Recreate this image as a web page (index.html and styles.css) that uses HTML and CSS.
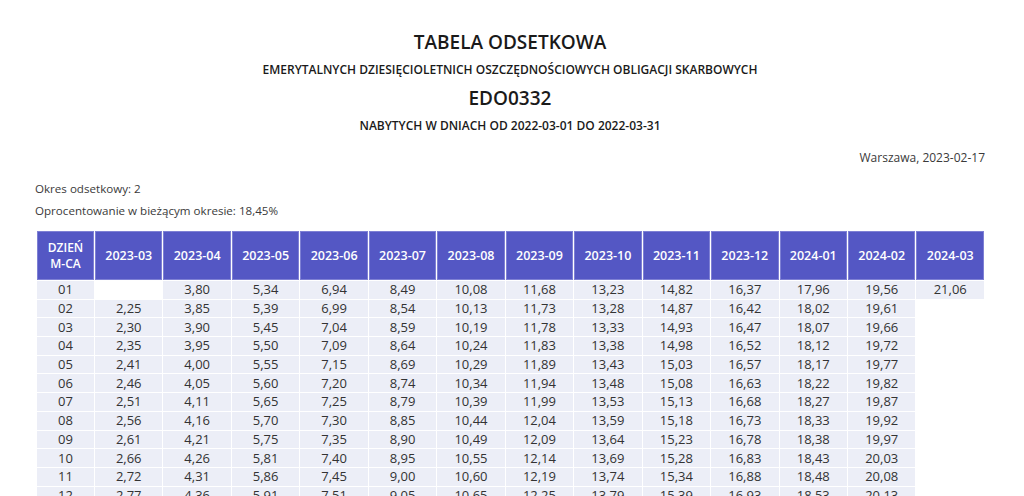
FILE: index.html
```html
<!DOCTYPE html>
<html lang="pl">
<head>
<meta charset="utf-8">
<title>Tabela odsetkowa EDO0332</title>
<link rel="stylesheet" href="styles.css">
</head>
<body>
<div class="page">
  <header class="doc-head">
    <h1 class="title">TABELA ODSETKOWA</h1>
    <p class="subtitle">EMERYTALNYCH DZIESIĘCIOLETNICH OSZCZĘDNOŚCIOWYCH OBLIGACJI SKARBOWYCH</p>
    <h2 class="code">EDO0332</h2>
    <p class="subtitle range">NABYTYCH W DNIACH OD 2022-03-01 DO 2022-03-31</p>
  </header>
  <p class="date">Warszawa, 2023-02-17</p>
  <div class="info">
    <p>Okres odsetkowy: 2</p>
    <p>Oprocentowanie w bieżącym okresie: 18,45%</p>
  </div>
  <table class="rates">
    <thead>
      <tr>
        <th class="day">DZIEŃ<br>M-CA</th>
        <th>2023-03</th><th>2023-04</th><th>2023-05</th><th>2023-06</th><th>2023-07</th><th>2023-08</th><th>2023-09</th><th>2023-10</th><th>2023-11</th><th>2023-12</th><th>2024-01</th><th>2024-02</th><th>2024-03</th>
      </tr>
    </thead>
    <tbody>
      <tr><td>01</td><td class="empty"></td><td>3,80</td><td>5,34</td><td>6,94</td><td>8,49</td><td>10,08</td><td>11,68</td><td>13,23</td><td>14,82</td><td>16,37</td><td>17,96</td><td>19,56</td><td>21,06</td></tr>
      <tr><td>02</td><td>2,25</td><td>3,85</td><td>5,39</td><td>6,99</td><td>8,54</td><td>10,13</td><td>11,73</td><td>13,28</td><td>14,87</td><td>16,42</td><td>18,02</td><td>19,61</td><td class="empty"></td></tr>
      <tr><td>03</td><td>2,30</td><td>3,90</td><td>5,45</td><td>7,04</td><td>8,59</td><td>10,19</td><td>11,78</td><td>13,33</td><td>14,93</td><td>16,47</td><td>18,07</td><td>19,66</td><td class="empty"></td></tr>
      <tr><td>04</td><td>2,35</td><td>3,95</td><td>5,50</td><td>7,09</td><td>8,64</td><td>10,24</td><td>11,83</td><td>13,38</td><td>14,98</td><td>16,52</td><td>18,12</td><td>19,72</td><td class="empty"></td></tr>
      <tr><td>05</td><td>2,41</td><td>4,00</td><td>5,55</td><td>7,15</td><td>8,69</td><td>10,29</td><td>11,89</td><td>13,43</td><td>15,03</td><td>16,57</td><td>18,17</td><td>19,77</td><td class="empty"></td></tr>
      <tr><td>06</td><td>2,46</td><td>4,05</td><td>5,60</td><td>7,20</td><td>8,74</td><td>10,34</td><td>11,94</td><td>13,48</td><td>15,08</td><td>16,63</td><td>18,22</td><td>19,82</td><td class="empty"></td></tr>
      <tr><td>07</td><td>2,51</td><td>4,11</td><td>5,65</td><td>7,25</td><td>8,79</td><td>10,39</td><td>11,99</td><td>13,53</td><td>15,13</td><td>16,68</td><td>18,27</td><td>19,87</td><td class="empty"></td></tr>
      <tr><td>08</td><td>2,56</td><td>4,16</td><td>5,70</td><td>7,30</td><td>8,85</td><td>10,44</td><td>12,04</td><td>13,59</td><td>15,18</td><td>16,73</td><td>18,33</td><td>19,92</td><td class="empty"></td></tr>
      <tr><td>09</td><td>2,61</td><td>4,21</td><td>5,75</td><td>7,35</td><td>8,90</td><td>10,49</td><td>12,09</td><td>13,64</td><td>15,23</td><td>16,78</td><td>18,38</td><td>19,97</td><td class="empty"></td></tr>
      <tr><td>10</td><td>2,66</td><td>4,26</td><td>5,81</td><td>7,40</td><td>8,95</td><td>10,55</td><td>12,14</td><td>13,69</td><td>15,28</td><td>16,83</td><td>18,43</td><td>20,03</td><td class="empty"></td></tr>
      <tr><td>11</td><td>2,72</td><td>4,31</td><td>5,86</td><td>7,45</td><td>9,00</td><td>10,60</td><td>12,19</td><td>13,74</td><td>15,34</td><td>16,88</td><td>18,48</td><td>20,08</td><td class="empty"></td></tr>
      <tr><td>12</td><td>2,77</td><td>4,36</td><td>5,91</td><td>7,51</td><td>9,05</td><td>10,65</td><td>12,25</td><td>13,79</td><td>15,39</td><td>16,93</td><td>18,53</td><td>20,13</td><td class="empty"></td></tr>
    </tbody>
  </table>
</div>
</body>
</html>
```

FILE: styles.css
```css
* { box-sizing: border-box; }
html, body { margin: 0; padding: 0; background: #ffffff; }
body {
  font-family: "Open Sans", "Noto Sans", sans-serif;
  color: #2b2b2b;
}
.page {
  width: 1024px;
  padding: 0 39px 0 35px;
}
.doc-head {
  display: flex;
  flex-direction: column;
  align-items: center;
  padding-top: 30px;
}
.title {
  margin: 0;
  font-size: 19px;
  font-weight: 600;
  line-height: 24px;
  color: #1a1a1a;
}
.subtitle {
  margin: 8px 0 0;
  font-size: 12px;
  font-weight: 600;
  line-height: 15px;
  color: #1a1a1a;
}
.code {
  margin: 9px 0 0;
  font-size: 19px;
  font-weight: 600;
  line-height: 24px;
  color: #1a1a1a;
}
.range { margin-top: 8px; }
.date {
  margin: 17px 0 0;
  text-align: right;
  font-size: 12px;
  line-height: 16px;
  color: #3a3a3a;
}
.info {
  margin-top: 12px;
  font-size: 11.6px;
  line-height: 22px;
  color: #3a3a3a;
}
.info p { margin: 0; }
.rates {
  margin: 8px 0 0 1px;
  width: 949px;
  border-collapse: separate;
  border-spacing: 1px;
  table-layout: fixed;
  font-size: 13px;
}
.rates th {
  background: #5457c4;
  color: #ffffff;
  font-weight: 600;
  font-size: 12.5px;
  height: 49px;
  line-height: 16px;
  box-shadow: inset 0 0 0 1px #7e80d4;
  text-align: center;
  padding: 0;
}
.rates th.day { width: 57px; font-size: 12px; }
.rates td {
  background: #eceef7;
  text-align: center;
  height: 17.7px;
  line-height: 17px;
  padding: 0;
  color: #333333;
}
.rates td.empty { background: #ffffff; }
```
